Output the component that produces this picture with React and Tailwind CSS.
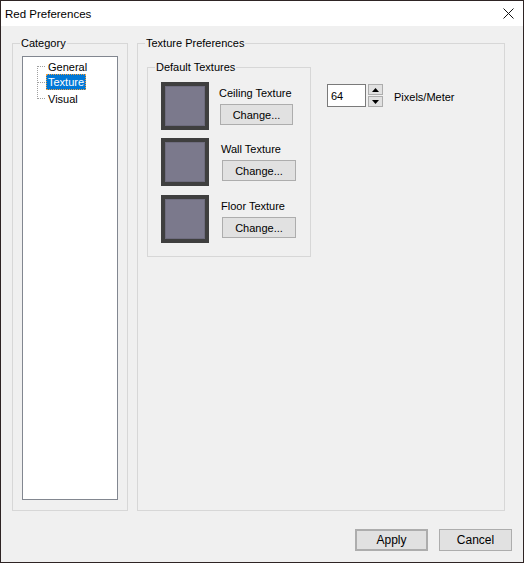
import { useState } from "react";

function Swatch() {
  return (
    <div className="w-[48px] h-[48px] shrink-0 bg-[#3f3f3f] p-[4px]">
      <div className="w-full h-full bg-[#7b798c] border border-[#6e6c7e]" />
    </div>
  );
}

function WinButton({ children, className = "" }) {
  return (
    <button className={`h-[21px] bg-[#e1e1e1] border border-[#adadad] text-[11px] leading-[14px] text-black flex items-center justify-center ${className}`}>
      {children}
    </button>
  );
}

function TextureRow({ label, gap, btnGap, btnW, mt }) {
  return (
    <div className={`flex ${mt}`}>
      <Swatch />
      <div className={`flex flex-col ${gap}`}>
        <span className="mt-[4px] leading-[14px]">{label}</span>
        <WinButton className={`mt-[4px] ${btnGap} ${btnW}`}>Change...</WinButton>
      </div>
    </div>
  );
}

function Tree({ selected, onSelect }) {
  const items = ["General", "Texture", "Visual"];
  return (
    <div className="flex pl-[14px] pt-[1px]">
      <svg width="9" height="48" className="shrink-0" shapeRendering="crispEdges">
        <g stroke="#a0a0a0" strokeWidth="1" strokeDasharray="1 1">
          <line x1="0.5" y1="8" x2="0.5" y2="41" />
          <line x1="1" y1="8.5" x2="9" y2="8.5" />
          <line x1="1" y1="24.5" x2="9" y2="24.5" />
          <line x1="1" y1="40.5" x2="9" y2="40.5" />
        </g>
      </svg>
      <div className="flex flex-col">
        {items.map((it) => (
          <div key={it} className="h-[16px] flex items-center" onClick={() => onSelect(it)}>
            <span
              className={
                it === selected
                  ? "px-[1px] h-[16px] flex items-center pt-[1px] bg-[#0078d7] text-white border border-dotted border-[#f0a040]"
                  : "px-[2px] pt-[2px] leading-[14px]"
              }
            >
              {it}
            </span>
          </div>
        ))}
      </div>
    </div>
  );
}

export default function App() {
  const [selected, setSelected] = useState("Texture");
  return (
    <div className="w-[524px] h-[563px] border border-[#2e2424] bg-[#f0f0f0] flex flex-col text-[11px] text-black font-['Liberation_Sans',Arial,sans-serif] select-none">
      {/* title bar */}
      <div className="h-[25px] bg-white flex items-center justify-between pl-[4px] pr-[9px] shrink-0">
        <span className="leading-[14px] text-[11.5px]">Red Preferences</span>
        <svg width="11" height="11" viewBox="0 0 11 11">
          <path d="M0.5 0.5 L10.5 10.5 M10.5 0.5 L0.5 10.5" stroke="#111" strokeWidth="1" fill="none" />
        </svg>
      </div>

      {/* body */}
      <div className="flex-1 flex flex-col pt-[10px] px-[11px]">
        <div className="flex gap-[9px] h-[475px]">
          <fieldset className="w-[116px] h-[475px] border border-[#d7d7d7] px-[9px] pt-[6px]">
            <legend className="ml-[-2px] px-[1px] leading-[14px]">Category</legend>
            <div className="h-[444px] bg-white border border-[#828790]">
              <Tree selected={selected} onSelect={setSelected} />
            </div>
          </fieldset>

          <fieldset className="w-[368px] h-[475px] border border-[#d7d7d7] pl-[9px] pt-[10px]">
            <legend className="ml-[-2px] px-[1px] leading-[14px]">Texture Preferences</legend>
            <div className="flex items-start">
              <fieldset className="w-[164px] h-[197px] border border-[#d7d7d7] pl-[13px] pt-[8px]">
                <legend className="ml-[-6px] px-[1px] leading-[14px]">Default Textures</legend>
                <TextureRow label="Ceiling Texture" gap="ml-[10px]" btnGap="ml-[1px]" btnW="w-[73px]" mt="mt-0" />
                <TextureRow label="Wall Texture" gap="ml-[12px]" btnGap="ml-[1px]" btnW="w-[74px]" mt="mt-[8px]" />
                <TextureRow label="Floor Texture" gap="ml-[12px]" btnGap="ml-[1px]" btnW="w-[74px]" mt="mt-[9px]" />
              </fieldset>

              <div className="flex items-start ml-[16px] mt-[24px]">
                <div className="w-[39px] h-[23px] bg-white border border-[#7a7a7a] pl-[3px] flex items-center leading-[14px]">
                  64
                </div>
                <div className="flex flex-col ml-[2px] gap-[1px]">
                  <div className="w-[15px] h-[11px] bg-[#e1e1e1] border border-[#adadad] flex items-center justify-center">
                    <svg width="7" height="4" viewBox="0 0 7 4"><path d="M3.5 0 L7 4 L0 4 Z" fill="#000" /></svg>
                  </div>
                  <div className="w-[15px] h-[11px] bg-[#e1e1e1] border border-[#adadad] flex items-center justify-center">
                    <svg width="7" height="4" viewBox="0 0 7 4"><path d="M0 0 L7 0 L3.5 4 Z" fill="#000" /></svg>
                  </div>
                </div>
                <span className="ml-[11px] mt-[6px] leading-[14px]">Pixels/Meter</span>
              </div>
            </div>
          </fieldset>
        </div>

        <div className="flex justify-end gap-[11px] mt-[18px]">
          <WinButton className="w-[73px] h-[22px] border-2 border-[#0078d7] text-[12px]">Apply</WinButton>
          <WinButton className="w-[73px] h-[22px] text-[12px]">Cancel</WinButton>
        </div>
      </div>
    </div>
  );
}
